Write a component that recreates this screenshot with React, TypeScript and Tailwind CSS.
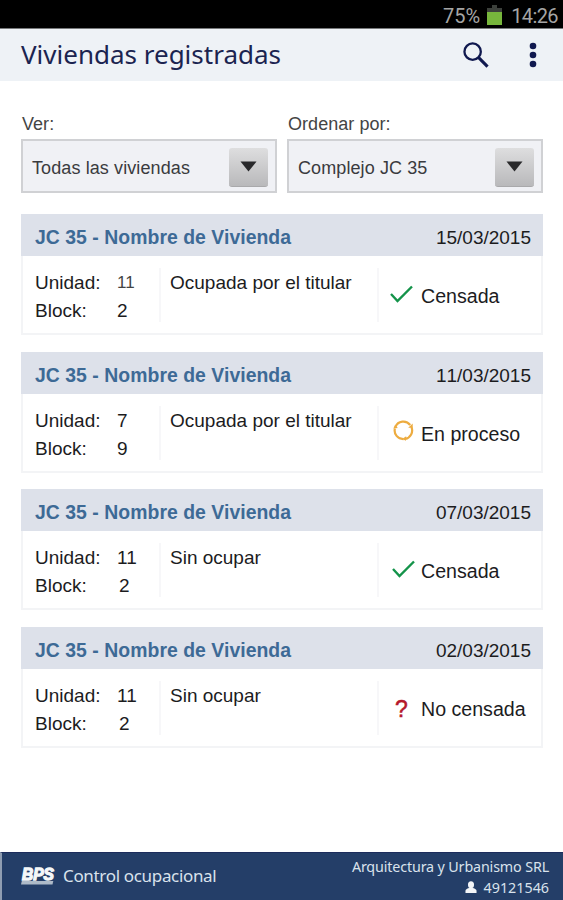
import { ReactNode } from "react";

type Status = "done" | "progress" | "unknown";

interface Home {
    date: string
    unit: string
    block: string
    occupancy: string
    status: Status
    unitClass: string
    blockClass: string
    cardClass: string
    iconClass: string
}

const homes: Home[] = [
    { date: "15/03/2015", unit: "11", block: "2", occupancy: "Ocupada por el titular", status: "done", unitClass: "text-[17px] text-[#444]", blockClass: "", cardClass: "mb-[18px]", iconClass: "ml-[11px] mr-[8px]" },
    { date: "11/03/2015", unit: "7", block: "9", occupancy: "Ocupada por el titular", status: "progress", unitClass: "", blockClass: "", cardClass: "mb-[17px]", iconClass: "ml-[14px] mr-[7px]" },
    { date: "07/03/2015", unit: "11", block: "2", occupancy: "Sin ocupar", status: "done", unitClass: "", blockClass: "pl-[2px]", cardClass: "mb-[18px]", iconClass: "ml-[13px] mr-[6px]" },
    { date: "02/03/2015", unit: "11", block: "2", occupancy: "Sin ocupar", status: "unknown", unitClass: "", blockClass: "pl-[2px]", cardClass: "", iconClass: "ml-[16px] mr-[14px]" },
];

const statusLabels: Record<Status, string> = {
    done: "Censada",
    progress: "En proceso",
    unknown: "No censada",
};

function StatusIcon({ status }: { status: Status }) {
    if (status === "done") {
        return (
            <svg className="mb-[2px]" width="23" height="18" viewBox="0 0 23 18" fill="none" stroke="#14934a" strokeWidth="2.4">
                <path d="M1 9 7.5 16 22 1.5" />
            </svg>
        );
    }
    if (status === "progress") {
        return (
            <svg className="mb-[6px]" width="21" height="21" viewBox="0 0 21 21" fill="none" stroke="#edac40" strokeWidth="2.2">
                <path d="M2.4 7A8.600 8.600 0 0 1 17.200 5M18.400 7A8.600 8.600 0 0 1 12.200 18.900M10.500 19.100A8.600 8.600 0 0 1 1.900 8.500" />
                <path d="M19.700 3.500v4.300h-4.500zM13.200 16.200 9 18.900l4 1.900zM.3 8.600l1.600-3.300 3 2.800z" fill="#edac40" stroke="none" />
            </svg>
        );
    }
    return <span className="block w-[12px] pt-[2px] text-center text-[23px] leading-[24px] text-[#b5192b] [-webkit-text-stroke:0.5px_#b5192b]">?</span>;
}

function Select({ label, children }: { label: string; children: ReactNode }) {
    return (
        <div className="w-[256px]">
            <p className="h-[30px] pl-[1px] text-[18px] leading-[30px] tracking-[0.05px] text-[#444]">{label}</p>
            <div className="flex h-[54px] items-center justify-between border-2 border-[#d0d1d4] bg-[#f0f1f5] pr-[7px] pl-[9px] text-[18px] tracking-[0.1px] text-[#3a3b3e]">
                <span className="pt-[4px] whitespace-nowrap">{children}</span>
                <span className="mt-[2px] flex h-[39px] w-[39px] items-center justify-center rounded-[3px] border-b border-[#a9a9ab] bg-linear-to-b from-[#dededf] to-[#b9b9bb]">
                    <svg width="17" height="11" viewBox="0 0 17 11"><path d="M.5.5h16l-8 10z" fill="#29292b" /></svg>
                </span>
            </div>
        </div>
    );
}

function HomeCard({ home }: { home: Home }) {
    return (
        <article className={`h-[120px] w-[522px] text-[19px] text-[#1c1c1e] ${home.cardClass}`}>
            <header className="flex h-[42px] items-center justify-between bg-[#dde1ea] pt-[5px] pr-[12px] pl-[14px]">
                <h2 className="text-[19.4px] font-bold tracking-[0.04px] text-[#3d6a96]">JC 35 - Nombre de Vivienda</h2>
                <span className="pt-[1px] [font-kerning:none]">{home.date}</span>
            </header>
            <section className="flex h-[79px] border-x-2 border-b-2 border-[#f3f4f6] pt-[12px] pl-[12px]">
                <dl className="grid h-[54px] w-[126px] grid-cols-[82px_1fr] border-r-2 border-[#f7f7f9] pt-[1px] leading-[28px]">
                    <dt className="h-[28px]">Unidad:</dt>
                    <dd className={home.unitClass}>{home.unit}</dd>
                    <dt className="h-[28px]">Block:</dt>
                    <dd className={home.blockClass}>{home.block}</dd>
                </dl>
                <p className="w-[216px] pt-[1px] pl-[9px] leading-[28px]">{home.occupancy}</p>
                <div className="flex h-[54px] items-center border-l-2 border-[#f7f7f9]">
                    <span className={home.iconClass}><StatusIcon status={home.status} /></span>
                    <span className="pt-[4px] text-[19.6px]">{statusLabels[home.status]}</span>
                </div>
            </section>
        </article>
    );
}

export default function App() {
    return (
        <main className="flex h-[900px] w-[563px] flex-col overflow-hidden bg-white font-['Liberation_Sans',sans-serif]">
            <div className="flex h-[29px] items-center justify-end border-b border-[#77797b] bg-black pt-[3px] pr-[5px] font-[Roboto,sans-serif] text-[20px] text-[#a5a5a5]">
                <span>75%</span>
                <svg className="mr-[9px] ml-[7px]" width="15" height="21" viewBox="0 0 15 21">
                    <path d="M5 0h5v3h5v5H0V3h5z" fill="#3c403b" />
                    <path d="M0 7h15v13H0z" fill="#77b63c" />
                </svg>
                <span className="tracking-[-0.6px]">14:26</span>
            </div>
            <header className="flex h-[52px] items-center justify-between bg-[#eef2f6] pr-[26px] pl-[21px]">
                <h1 className="pb-[2px] font-['Noto_Sans',sans-serif] text-[26px] text-[#1b2450]">Viviendas registradas</h1>
                <div className="flex items-center">
                    <svg className="mr-[40px]" width="26" height="26" viewBox="0 0 27 27" fill="none" stroke="#10194f">
                        <circle cx="10" cy="10" r="8.5" strokeWidth="2.4" />
                        <path d="M16 16 25.5 25.5" strokeWidth="3.2" />
                    </svg>
                    <svg width="8" height="26" viewBox="0 0 8 26" fill="#10194f">
                        <circle cx="4" cy="4" r="3.3" />
                        <circle cx="4" cy="13" r="3.3" />
                        <circle cx="4" cy="22" r="3.3" />
                    </svg>
                </div>
            </header>
            <section className="flex gap-[10px] pt-[28px] pl-[21px]">
                <Select label="Ver:">Todas las viviendas</Select>
                <Select label="Ordenar por:">Complejo JC 35</Select>
            </section>
            <section className="flex-1 pt-[21px] pl-[21px]">
                {homes.map(home => <HomeCard key={home.date} home={home} />)}
            </section>
            <footer className="flex h-[48px] items-center justify-between border-t border-l-2 border-t-[#1c2c5c] border-l-[#8f9db2] bg-[#243e68] pr-[14px] pl-[19px] font-['Noto_Sans',sans-serif] text-[#d9e2ec]">
                <div className="flex items-center">
                    <svg className="mb-[2px]" width="34" height="18" viewBox="0 0 34 18">
                        <text x="1" y="13" textLength="32" lengthAdjust="spacingAndGlyphs" fontFamily="Liberation Sans" fontSize="16" fontWeight="bold" fontStyle="italic" fill="#f5f7f9" stroke="#f5f7f9" strokeWidth="1.3">BPS</text>
                        <path d="M.8 14h31.5l-.8 3.5H0z" fill="#aebac8" />
                    </svg>
                    <span className="ml-[8px] pb-[2px] text-[17px] tracking-[-0.33px]">Control ocupacional</span>
                </div>
                <div className="flex flex-col items-end text-[14.3px] leading-[21px]">
                    <span className="tracking-[-0.14px]">Arquitectura y Urbanismo SRL</span>
                    <span className="flex items-center">
                        <svg className="mr-[7px]" width="12" height="12" viewBox="0 0 12 13" fill="#f3f5f8">
                            <ellipse cx="6" cy="4" rx="3.3" ry="3.8" />
                            <path d="M0 13v-2.5C0 8.8 2.5 8 4 7.6h4c1.5.4 4 1.2 4 2.9V13z" />
                        </svg>
                        49121546
                    </span>
                </div>
            </footer>
        </main>
    );
}
